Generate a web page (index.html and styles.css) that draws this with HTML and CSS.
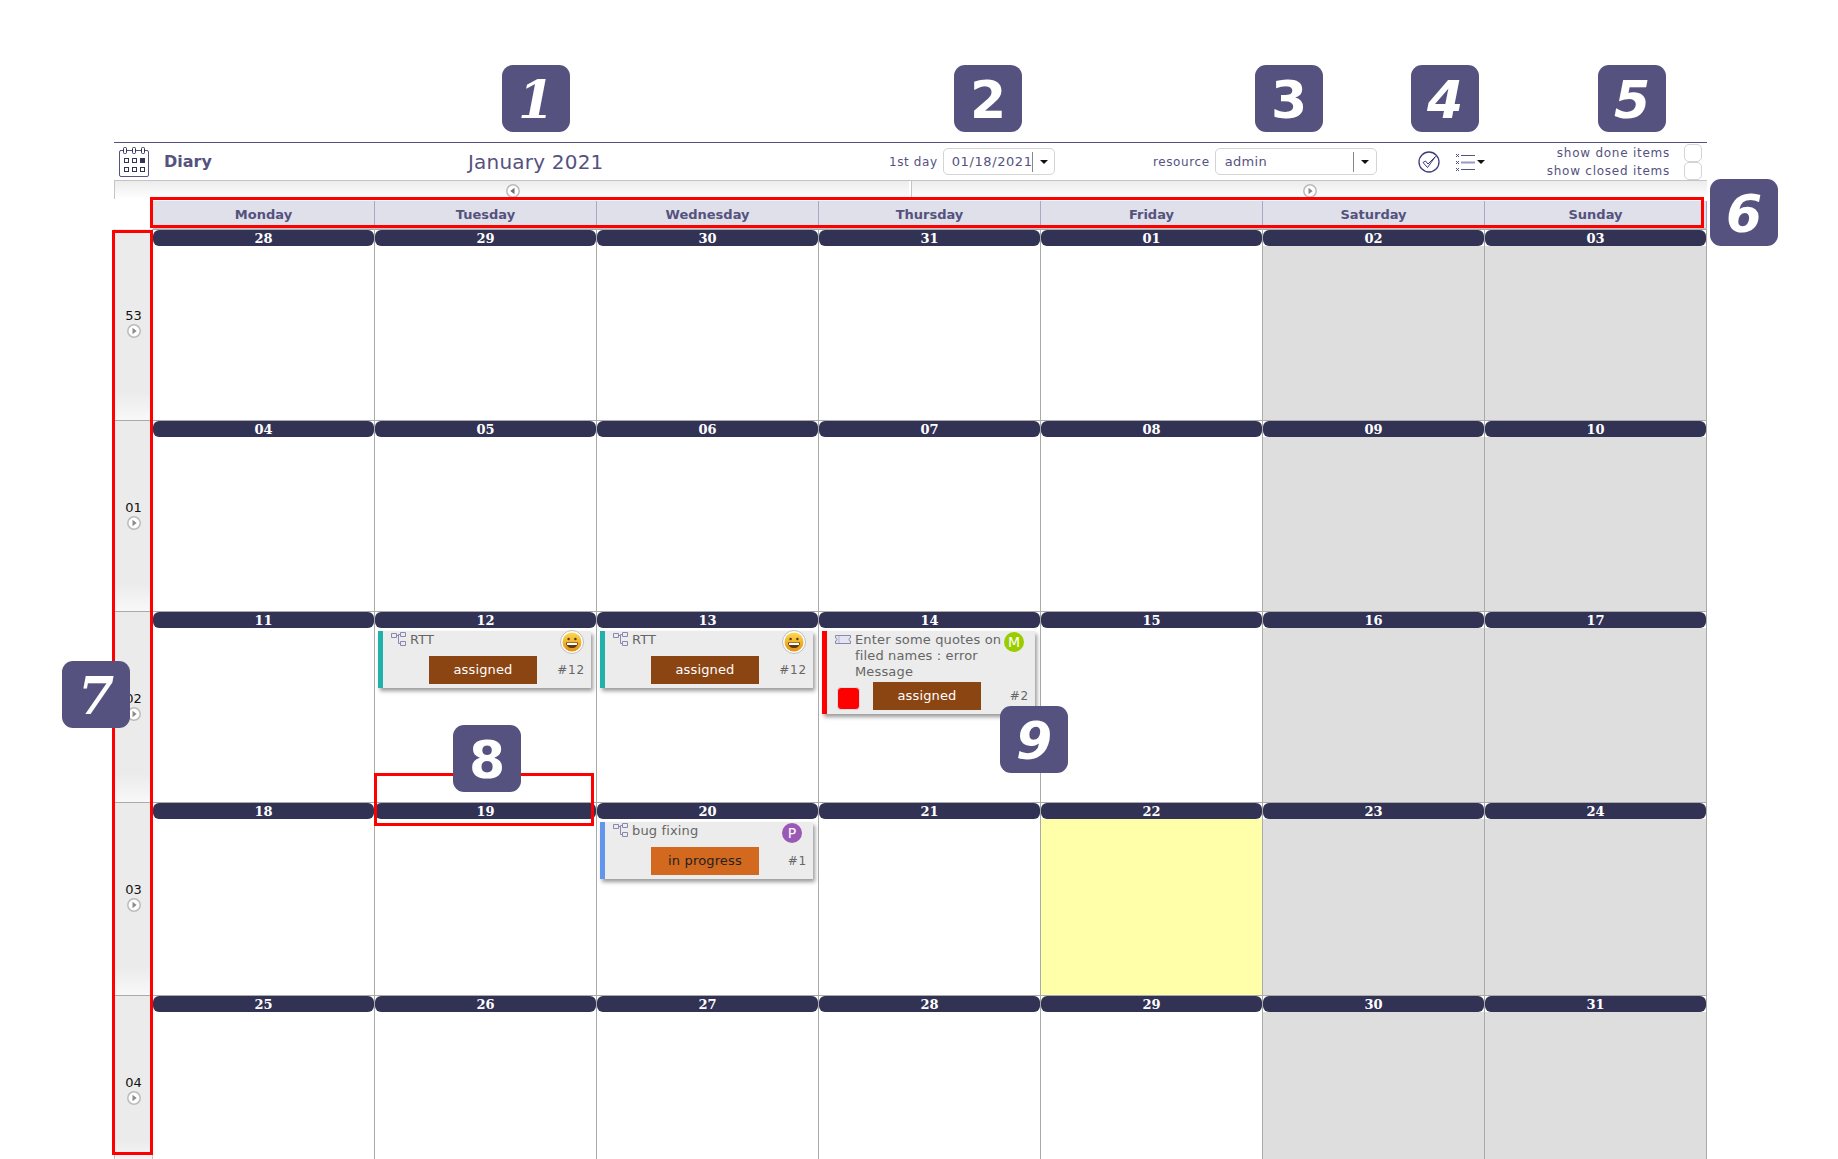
FILE: index.html
```html
<!DOCTYPE html>
<html lang="en">
<head>
    <meta charset="UTF-8">
    <meta name="viewport" content="width=device-width, initial-scale=1.0">
    <title>Diary</title>
    <link rel="stylesheet" href="styles.css">
</head>
<body>
    <svg class="icon-defs" width="0" height="0">
        <symbol id="i-activity" viewBox="0 0 15 14">
            <path d="M.5 1.5h5v4h-5zM9.5.5h5v4h-5zM9.5 9.5h5v4h-5zM5.5 3.5h2M7.5 2.5v9M7.5 2.5h2M7.5 11.5h2" fill="none" stroke="#8a88b0"/>
        </symbol>
        <symbol id="i-ticket" viewBox="0 0 16 9">
            <path d="M.5.5h15v2.5a1.5 1.5 0 0 0 0 3v2.5H.5V6a1.5 1.5 0 0 0 0-3z" fill="#e4e4f0" stroke="#8a88b0"/>
            <path d="M4 1v7" stroke="#b4b4d0"/>
        </symbol>
        <symbol id="i-round-right" viewBox="0 0 14 14">
            <circle cx="7" cy="7" r="6.2" fill="#fff" stroke="#bbb" stroke-width="1.5"/>
            <path d="M5.500 3.800l4.200 3.200-4.200 3.200z" fill="#8c8c8c"/>
        </symbol>
        <symbol id="i-round-left" viewBox="0 0 14 14">
            <circle cx="7" cy="7" r="6.2" fill="#fff" stroke="#bbb" stroke-width="1.5"/>
            <path d="M8.500 3.800l-4.200 3.200 4.200 3.200z" fill="#707070"/>
        </symbol>
        <symbol id="i-smiley" viewBox="0 0 24 24">
            <defs>
                <linearGradient id="smile-fill" x1="0" y1="0" x2="0" y2="1">
                    <stop offset="0" stop-color="#fcd94e"/>
                    <stop offset="1" stop-color="#e58f14"/>
                </linearGradient>
            </defs>
            <circle cx="12" cy="12" r="11.500" fill="#fff" stroke="#bdbdbd"/>
            <circle cx="12" cy="12" r="9.500" fill="url(#smile-fill)"/>
            <circle cx="8.600" cy="9" r="1.200" fill="#5a3a10"/>
            <circle cx="15.400" cy="9" r="1.200" fill="#5a3a10"/>
            <path d="M6 12.500h12c0 3.500-2.600 5.500-6 5.500s-6-2-6-5.500z" fill="#5a3a10"/>
            <path d="M7 13h10v2H7z" fill="#fff"/>
        </symbol>
    </svg>

    <div class="planner">
        <div class="toolbar">
            <div class="brand">
                <svg class="brand-icon" width="30" height="30" viewBox="0 0 30 30">
                    <rect x=".5" y="3.500" width="29" height="26" rx="1.500" fill="#fff" stroke="#55527f"/>
                    <path d="M1 3.500h28" stroke="#55527f"/>
                    <g fill="#fff" stroke="#323254">
                        <rect x="4.500" y=".5" width="3" height="6" rx="1"/>
                        <rect x="13.500" y=".5" width="3" height="6" rx="1"/>
                        <rect x="22.500" y=".5" width="3" height="6" rx="1"/>
                        <rect x="5.500" y="11.500" width="4" height="4"/>
                        <rect x="13.500" y="11.500" width="4" height="4"/>
                        <rect x="5.500" y="20.500" width="4" height="4"/>
                        <rect x="13.500" y="20.500" width="4" height="4"/>
                        <rect x="21.500" y="20.500" width="4" height="4"/>
                    </g>
                    <rect x="21" y="11" width="5" height="5" fill="#323254"/>
                </svg>
                <span class="brand-name">Diary</span>
            </div>
            <div class="period">January 2021</div>
            <div class="field field-day">
                <label>1st day</label>
                <div class="combo combo-date"><span class="combo-value">01/18/2021</span><span class="combo-arrow"></span></div>
            </div>
            <div class="field">
                <label>resource</label>
                <div class="combo combo-resource"><span class="combo-value">admin</span><span class="combo-arrow"></span></div>
            </div>
            <svg class="check-icon" width="22" height="22" viewBox="0 0 22 22">
                <circle cx="11" cy="11" r="10" fill="#fff" stroke="#3d3a80" stroke-width="1.300"/>
                <path d="M5 11.500l4.500 5L17.500 5.500l-7.500 7.500-2.500-3z" fill="#fff" stroke="#3d3a80"/>
            </svg>
            <div class="list-menu">
                <svg width="20" height="20" viewBox="0 0 20 20">
                    <path d="M1 2l3 3M4 2l-3 3M1 9l3 3M4 9l-3 3M1 16l3 3M4 16l-3 3" stroke="#55527f"/>
                    <path d="M6 3.500h14M6 17.500h14" stroke="#55527f"/>
                    <path d="M6 10.500h14" stroke="#9a98c0" stroke-width="2"/>
                </svg>
                <span class="combo-arrow"></span>
            </div>
            <div class="show-options">
                <div class="show-row"><span>show done items</span><span class="tick"></span></div>
                <div class="show-row"><span>show closed items</span><span class="tick"></span></div>
            </div>
        </div>

        <div class="splitter">
            <div class="pane pane-left"><svg width="14" height="14"><use href="#i-round-left"/></svg></div>
            <div class="pane pane-right"><svg width="14" height="14"><use href="#i-round-right"/></svg></div>
        </div>

        <div class="day-names">
            <div>Monday</div><div>Tuesday</div><div>Wednesday</div><div>Thursday</div><div>Friday</div><div>Saturday</div><div>Sunday</div>
        </div>

        <div class="month">
            <div class="week-no"><span>53</span><svg width="14" height="14"><use href="#i-round-right"/></svg></div>
            <div class="day"><div class="day-no">28</div></div>
            <div class="day"><div class="day-no">29</div></div>
            <div class="day"><div class="day-no">30</div></div>
            <div class="day"><div class="day-no">31</div></div>
            <div class="day"><div class="day-no">01</div></div>
            <div class="day off"><div class="day-no">02</div></div>
            <div class="day off"><div class="day-no">03</div></div>

            <div class="week-no"><span>01</span><svg width="14" height="14"><use href="#i-round-right"/></svg></div>
            <div class="day"><div class="day-no">04</div></div>
            <div class="day"><div class="day-no">05</div></div>
            <div class="day"><div class="day-no">06</div></div>
            <div class="day"><div class="day-no">07</div></div>
            <div class="day"><div class="day-no">08</div></div>
            <div class="day off"><div class="day-no">09</div></div>
            <div class="day off"><div class="day-no">10</div></div>

            <div class="week-no"><span>02</span><svg width="14" height="14"><use href="#i-round-right"/></svg></div>
            <div class="day"><div class="day-no">11</div></div>
            <div class="day">
                <div class="day-no">12</div>
                <div class="card card-teal">
                    <div class="card-top">
                        <svg class="card-icon" width="15" height="14"><use href="#i-activity"/></svg>
                        <span class="card-name">RTT</span>
                        <svg class="smiley" width="24" height="24"><use href="#i-smiley"/></svg>
                    </div>
                    <div class="card-bottom">
                        <span class="card-prio"></span>
                        <span class="status status-assigned">assigned</span>
                        <span class="card-id">#12</span>
                    </div>
                </div>
            </div>
            <div class="day">
                <div class="day-no">13</div>
                <div class="card card-teal">
                    <div class="card-top">
                        <svg class="card-icon" width="15" height="14"><use href="#i-activity"/></svg>
                        <span class="card-name">RTT</span>
                        <svg class="smiley" width="24" height="24"><use href="#i-smiley"/></svg>
                    </div>
                    <div class="card-bottom">
                        <span class="card-prio"></span>
                        <span class="status status-assigned">assigned</span>
                        <span class="card-id">#12</span>
                    </div>
                </div>
            </div>
            <div class="day">
                <div class="day-no">14</div>
                <div class="card card-red">
                    <div class="card-top">
                        <svg class="card-icon card-icon-ticket" width="16" height="9"><use href="#i-ticket"/></svg>
                        <span class="card-name">Enter some quotes on filed names : error Message</span>
                        <span class="avatar avatar-m">M</span>
                    </div>
                    <div class="card-bottom card-bottom-tight">
                        <span class="card-prio"><span class="prio-square"></span></span>
                        <span class="status status-assigned">assigned</span>
                        <span class="card-id">#2</span>
                    </div>
                </div>
            </div>
            <div class="day"><div class="day-no">15</div></div>
            <div class="day off"><div class="day-no">16</div></div>
            <div class="day off"><div class="day-no">17</div></div>

            <div class="week-no"><span>03</span><svg width="14" height="14"><use href="#i-round-right"/></svg></div>
            <div class="day"><div class="day-no">18</div></div>
            <div class="day"><div class="day-no">19</div></div>
            <div class="day">
                <div class="day-no">20</div>
                <div class="card card-blue">
                    <div class="card-top">
                        <svg class="card-icon" width="15" height="14"><use href="#i-activity"/></svg>
                        <span class="card-name">bug fixing</span>
                        <span class="avatar avatar-p">P</span>
                    </div>
                    <div class="card-bottom">
                        <span class="card-prio"></span>
                        <span class="status status-progress">in progress</span>
                        <span class="card-id">#1</span>
                    </div>
                </div>
            </div>
            <div class="day"><div class="day-no">21</div></div>
            <div class="day today"><div class="day-no">22</div></div>
            <div class="day off"><div class="day-no">23</div></div>
            <div class="day off"><div class="day-no">24</div></div>

            <div class="week-no"><span>04</span><svg width="14" height="14"><use href="#i-round-right"/></svg></div>
            <div class="day"><div class="day-no">25</div></div>
            <div class="day"><div class="day-no">26</div></div>
            <div class="day"><div class="day-no">27</div></div>
            <div class="day"><div class="day-no">28</div></div>
            <div class="day"><div class="day-no">29</div></div>
            <div class="day off"><div class="day-no">30</div></div>
            <div class="day off"><div class="day-no">31</div></div>
        </div>
    </div>

    <!-- annotations on top of the screenshot -->
    <div class="mark mark-days"></div>
    <div class="mark mark-weeks"></div>
    <div class="mark mark-date"></div>

    <div class="badge badge-1 slant-serif">1</div>
    <div class="badge badge-2">2</div>
    <div class="badge badge-3">3</div>
    <div class="badge badge-4 slant">4</div>
    <div class="badge badge-5 slant">5</div>
    <div class="badge badge-6 slant">6</div>
    <div class="badge badge-7 slant-serif">7</div>
    <div class="badge badge-8">8</div>
    <div class="badge badge-9 slant">9</div>
</body>
</html>
```

FILE: styles.css
```css
* {
    box-sizing: border-box;
}

html, body {
    height: 100%;
}

body {
    margin: 0;
    background-color: #fff;
    font-family: "DejaVu Sans", Verdana, sans-serif;
    font-size: 12px;
    color: #55527f;
    overflow: hidden;
    position: relative;
}

.icon-defs {
    position: absolute;
}

.planner {
    width: 1593px;
    margin: 142px 0 0 114px;
}

/* toolbar */
.toolbar {
    display: flex;
    align-items: center;
    height: 39px;
    border-top: 1px solid #55527f;
    border-bottom: 1px solid #c4c4c4;
}

.brand {
    display: flex;
    align-items: center;
    width: 354px;
    padding-left: 5px;
}

.brand-name {
    margin-left: 15px;
    font-size: 16px;
    font-weight: bold;
}

.period {
    width: 421px;
    font-size: 20px;
    letter-spacing: .2px;
}

.field {
    display: flex;
    align-items: center;
    gap: 5px;
}

.field-day {
    width: 264px;
}

.combo {
    display: flex;
    align-items: center;
    height: 27px;
    border: 1px solid #d4d4d4;
    border-radius: 5px;
    padding-left: 8px;
    font-size: 13px;
}

.combo-date {
    width: 112px;
    letter-spacing: .6px;
}

.combo-resource {
    width: 162px;
    padding-left: 9px;
    letter-spacing: .3px;
}

.combo-value {
    flex: 1;
    height: 20px;
    line-height: 20px;
    border-right: 1px solid #888;
    white-space: nowrap;
}

.combo-date .combo-value {
    flex: none;
    width: 81px;
}

.combo-arrow {
    width: 0;
    height: 0;
    margin: 0 7px;
    border-left: 4px solid transparent;
    border-right: 4px solid transparent;
    border-top: 4px solid #111;
}

.field label {
    letter-spacing: .6px;
}

.check-icon {
    margin-left: 41px;
}

.list-menu {
    display: flex;
    align-items: center;
    margin-left: 15px;
}

.list-menu .combo-arrow {
    margin: 0 0 0 2px;
}

.show-options {
    margin-left: auto;
    padding-right: 5px;
}

.show-row {
    display: flex;
    align-items: center;
    justify-content: flex-end;
    gap: 14px;
    height: 18px;
    letter-spacing: .75px;
}

.tick {
    width: 18px;
    height: 18px;
    border: 1px solid #d4d4d4;
    border-radius: 5px;
}

/* collapsed side panes */
.splitter {
    display: grid;
    grid-template-columns: 795px 1fr;
    gap: 2px;
    height: 18px;
}

.pane {
    display: flex;
    justify-content: center;
    padding-top: 3px;
    background: linear-gradient(#ececec, #fff);
    border-left: 1px solid #c4c4c4;
}

.pane svg {
    display: block;
}

.pane-left svg {
    margin-left: 1px;
}

/* day names */
.day-names {
    display: grid;
    grid-template-columns: repeat(7, 1fr);
    margin: 2px 0 0 39px;
    height: 28px;
    border-bottom: 1px solid #c4c4c4;
    padding-bottom: 2px;
}

.day-names div {
    background-color: #dfe0e9;
    border-right: 1px solid #a8a8c8;
    text-align: center;
    font-size: 13px;
    font-weight: bold;
    line-height: 27px;
}

/* month grid */
.month {
    display: grid;
    grid-template-columns: 39px repeat(7, 1fr);
    grid-template-rows: 191px 191px 191px 193px 170px;
}

.week-no {
    display: flex;
    flex-direction: column;
    align-items: center;
    padding-top: 79px;
    gap: 1px;
    background: linear-gradient(#ebebeb 85%, #f8f8f8);
    border-top: 1px solid #aaa;
    border-left: 1px solid #c4c4c4;
    border-right: 1px solid #c4c4c4;
    color: #111;
    font-size: 13px;
}

.month .week-no:nth-child(1) {
    border-top: 0;
}

.week-no svg {
    display: block;
}

.day {
    border-top: 1px solid #aaa;
    border-right: 1px solid #aaa;
    background-color: #fff;
    min-width: 0;
}

.day.off {
    background: linear-gradient(#fff 16px, #dedede 16px);
}

.day.today {
    background: linear-gradient(#fff 16px, #ffffaa 16px);
    border-left: 1px solid #aaa;
    margin-left: -1px;
}

.day-no {
    height: 16px;
    background-color: #323254;
    border-radius: 6px;
    color: #fff;
    text-align: center;
    font-family: "DejaVu Serif", serif;
    font-size: 13px;
    font-weight: bold;
    line-height: 18px;
    overflow: hidden;
}

/* activity cards */
.card {
    margin: 3px 0 0 3px;
    width: 213px;
    background-color: #ececec;
    border-left: 5px solid;
    box-shadow: 2px 3px 4px rgba(0, 0, 0, .4);
    color: #666;
    font-size: 13px;
    letter-spacing: .15px;
}

.card-teal { border-left-color: #20b2aa; }
.card-red { border-left-color: #f00; }
.card-blue { border-left-color: #6495ed; }

.card-top {
    display: flex;
    align-items: flex-start;
    min-height: 24px;
    padding: 0 3px 0 8px;
}

.card-icon {
    flex: none;
    margin: 1px 4px 0 0;
}

.card-icon-ticket {
    margin-top: 4px;
}

.card-name {
    flex: 1;
    padding-top: 1px;
    line-height: 16px;
}

.smiley {
    flex: none;
    margin: -1px 4px 0 0;
}

.avatar {
    flex: none;
    width: 20px;
    height: 20px;
    margin: 1px 8px 0 0;
    border-radius: 50%;
    color: #fff;
    text-align: center;
    font-size: 14px;
    line-height: 20px;
}

.avatar-m {
    background-color: #9acd00;
}

.avatar-p {
    background-color: #9b59b6;
}

.card-bottom {
    display: flex;
    align-items: center;
    height: 33px;
    padding-bottom: 3px;
}

.card-bottom-tight {
    margin-top: 1px;
}

.card-prio {
    width: 46px;
    padding-left: 10px;
}

.prio-square {
    display: block;
    width: 23px;
    height: 23px;
    margin-top: 4px;
    background-color: #f00;
    border-radius: 4px;
    border: 1px solid #ddd;
}

.status {
    width: 108px;
    height: 28px;
    text-align: center;
    line-height: 28px;
}

.status-assigned {
    background-color: #8b4513;
    color: #fff;
}

.status-progress {
    background-color: #d2691e;
    color: #222;
}

.card-id {
    flex: 1;
    padding-right: 6px;
    text-align: right;
    font-size: 12px;
    letter-spacing: .8px;
}

/* red highlight boxes */
.mark {
    position: absolute;
    border: 3px solid #f00;
}

.mark-days {
    left: 150px;
    top: 197px;
    width: 1554px;
    height: 31px;
}

.mark-weeks {
    left: 112px;
    top: 230px;
    width: 41px;
    height: 925px;
}

.mark-date {
    left: 374px;
    top: 773px;
    width: 220px;
    height: 53px;
}

/* numbered badges */
.badge {
    position: absolute;
    width: 68px;
    height: 67px;
    background-color: #55527f;
    border-radius: 11px;
    color: #fff;
    text-align: center;
    font-family: "DejaVu Sans", sans-serif;
    font-size: 52px;
    font-weight: bold;
    line-height: 70px;
}

.slant {
    font-style: italic;
}

.slant-serif {
    font-family: "DejaVu Serif", serif;
    font-style: italic;
}

.badge-1 { left: 502px; top: 65px; }
.badge-2 { left: 954px; top: 65px; }
.badge-3 { left: 1255px; top: 65px; }
.badge-4 { left: 1411px; top: 65px; }
.badge-5 { left: 1598px; top: 65px; }
.badge-6 { left: 1710px; top: 179px; }
.badge-7 { left: 62px; top: 661px; }
.badge-8 { left: 453px; top: 725px; }
.badge-9 { left: 1000px; top: 706px; }
```
